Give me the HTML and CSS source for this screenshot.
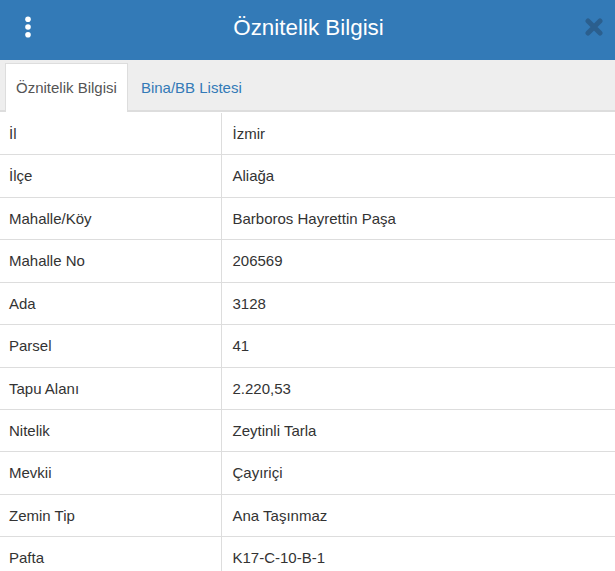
FILE: index.html
```html
<!DOCTYPE html>
<html lang="tr">
<head>
    <meta charset="UTF-8">
    <meta name="viewport" content="width=device-width, initial-scale=1.0">
    <title>Öznitelik Bilgisi</title>
    <link rel="stylesheet" href="styles.css">
</head>
<body>
    <div class="panel">
        <div class="panel-header">
            <span class="menu-btn">
                <svg width="8" height="22" viewBox="0 0 8 22">
                    <circle cx="4" cy="3.2" r="2.8" fill="#fff"/>
                    <circle cx="4" cy="11" r="2.8" fill="#fff"/>
                    <circle cx="4" cy="18.8" r="2.8" fill="#fff"/>
                </svg>
            </span>
            <h1>Öznitelik Bilgisi</h1>
            <span class="close-btn">
                <svg width="18" height="18" viewBox="0 0 18 18">
                    <path d="M3 3 L15 15 M15 3 L3 15" stroke="#2b5f8e" stroke-width="5" stroke-linecap="round"/>
                </svg>
            </span>
        </div>

        <ul class="tabs">
            <li class="tab active">Öznitelik Bilgisi</li>
            <li class="tab">Bina/BB Listesi</li>
        </ul>

        <table class="attr-table">
            <tbody>
                <tr><td>İl</td><td>İzmir</td></tr>
                <tr><td>İlçe</td><td>Aliağa</td></tr>
                <tr><td>Mahalle/Köy</td><td>Barboros Hayrettin Paşa</td></tr>
                <tr><td>Mahalle No</td><td>206569</td></tr>
                <tr><td>Ada</td><td>3128</td></tr>
                <tr><td>Parsel</td><td>41</td></tr>
                <tr><td>Tapu Alanı</td><td>2.220,53</td></tr>
                <tr><td>Nitelik</td><td>Zeytinli Tarla</td></tr>
                <tr><td>Mevkii</td><td>Çayıriçi</td></tr>
                <tr><td>Zemin Tip</td><td>Ana Taşınmaz</td></tr>
                <tr><td>Pafta</td><td>K17-C-10-B-1</td></tr>
            </tbody>
        </table>
    </div>
</body>
</html>
```

FILE: styles.css
```css
* {
    margin: 0;
    padding: 0;
    box-sizing: border-box;
}

body {
    font-family: "Liberation Sans", Arial, sans-serif;
    font-size: 15px;
    line-height: 1.42857;
    color: #333;
    background: #fff;
}

.panel {
    width: 100%;
}

.panel-header {
    height: 60px;
    background: #337ab7;
    display: flex;
    align-items: center;
    justify-content: space-between;
    padding: 0 12px 0 24px;
}

.panel-header h1 {
    font-size: 22.4px;
    line-height: 26px;
    font-weight: normal;
    color: #fff;
    flex: 1;
    text-align: center;
    margin-bottom: 5px;
}

.menu-btn,
.close-btn {
    display: flex;
    align-items: center;
}

.menu-btn {
    margin-bottom: 7px;
}

.close-btn {
    margin-bottom: 6px;
}

.tabs {
    list-style: none;
    display: flex;
    background: #eee;
    height: 52px;
    padding: 3px 0 0 5px;
    border-bottom: 2px solid #ddd;
}

.tab {
    padding: 13px 10px 13px;
    color: #337ab7;
    border: 1px solid transparent;
    margin-bottom: -2px;
    margin-right: 2px;
}

.tab.active {
    color: #555;
    background: #fff;
    border-color: #ddd;
    border-bottom: 0;
}

.attr-table {
    width: 100%;
    border-collapse: collapse;
    margin-top: 1px;
}

.attr-table td {
    padding: 10px 8px 10px 9px;
    border-bottom: 1px solid #ddd;
    vertical-align: middle;
}

.attr-table td:first-child {
    width: 221px;
    border-right: 1px solid #ddd;
}

.attr-table td:last-child {
    padding-left: 11px;
}
```
